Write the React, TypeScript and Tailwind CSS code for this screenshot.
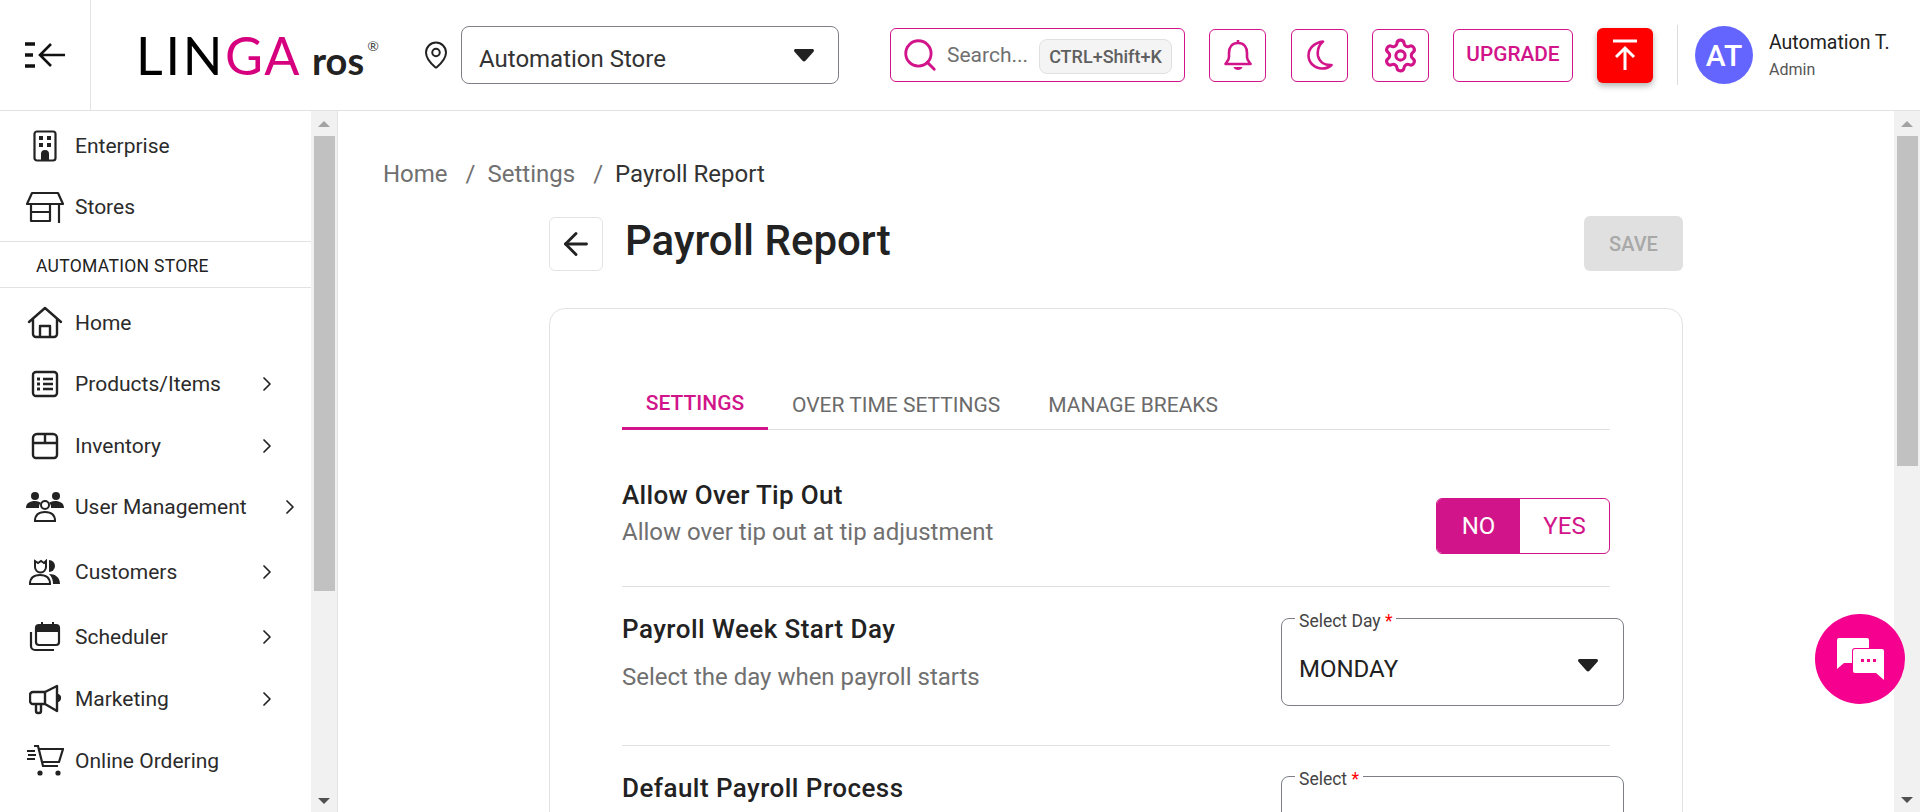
import { ArrowLeft, ChevronRight, MapPin, Search, Settings } from 'lucide-react';
import type { ReactNode } from 'react';

const roboto = { fontFamily: 'Roboto, sans-serif' };

function IconBox({ children }: { children: ReactNode }) {
  return (
    <button className="flex h-[53px] w-[57px] items-center justify-center rounded-md border border-[#d2148a] text-[#d2148a]">
      {children}
    </button>
  );
}

function BellIcon() {
  return (
    <svg width="28" height="32" viewBox="0 0 28 32" fill="none" stroke="currentColor" strokeWidth="2.6" strokeLinejoin="round">
      <path d="M14 1v3M14 4c-6 0-9 4-9 10v4c0 3-2 4.500-3.500 7h25c-1.500-2.500-3.500-4-3.500-7v-4c0-6-3-10-9-10z" />
      <path fill="currentColor" stroke="none" d="M9.500 28h9c-1 4-8 4-9 0z" />
    </svg>
  );
}

function MoonIcon() {
  return (
    <svg width="26" height="30" viewBox="0 0 26 30" fill="none" stroke="currentColor" strokeWidth="2.6" strokeLinejoin="round">
      <path d="M16 1.500C8 2.500 1.500 8 1.500 15.500S8 28.500 15 28.500c4 0 7-1 9.500-3.500-7 .5-12-3-13.500-9C10 10 12 5 16 1.500z" />
    </svg>
  );
}

function EnterpriseIcon() {
  return (
    <svg width="24" height="32" viewBox="0 0 24 32" fill="none" stroke="#222" strokeWidth="2.2">
      <rect x="1.500" y="1.500" width="21" height="29" rx="2.500" />
      <path fill="#222" stroke="none" d="M6 6h4v4H6zM14 6h4v4h-4zM6 13h4v4H6zM14 13h4v4h-4zM8 30v-6a4 4 0 0 1 8 0v6z" />
    </svg>
  );
}

function StoreIcon() {
  return (
    <svg width="38" height="32" viewBox="0 0 38 32" fill="none" stroke="#222" strokeWidth="2.2" strokeLinejoin="round">
      <path d="M6 2h26l5 11H1zM5 13v17h19V13M5 21h19M33 13v19" />
    </svg>
  );
}

function HomeIcon() {
  return (
    <svg width="36" height="34" viewBox="0 0 36 34" fill="none" stroke="#222" strokeWidth="2.400" strokeLinejoin="round" strokeLinecap="round">
      <path d="M2 16 18 2l16 14M6 13v15a3 3 0 0 0 3 3h18a3 3 0 0 0 3-3V13M13 31V20h10v11" />
    </svg>
  );
}

function ListIcon() {
  return (
    <svg width="28" height="28" viewBox="0 0 28 28" fill="none" stroke="#222" strokeWidth="2.400">
      <rect x="2" y="2" width="24" height="24" rx="3" />
      <path d="M12 9h10M12 14h10M12 19h10" />
      <path fill="#222" stroke="none" d="M6 7.500h3v3H6zM6 12.500h3v3H6zM6 17.500h3v3H6z" />
    </svg>
  );
}

function BoxIcon() {
  return (
    <svg width="28" height="28" viewBox="0 0 28 28" fill="none" stroke="#222" strokeWidth="2.400">
      <path d="M6 2h16a4 4 0 0 1 4 4v17a3 3 0 0 1-3 3H5a3 3 0 0 1-3-3V6a4 4 0 0 1 4-4zM2 11h24M14 2v9" />
    </svg>
  );
}

function UsersIcon() {
  return (
    <svg width="38" height="32" viewBox="0 0 38 32" fill="none" stroke="#222" strokeWidth="2">
      <circle cx="9" cy="5" r="4" fill="#222" stroke="none" />
      <circle cx="30" cy="5" r="4" fill="#222" stroke="none" />
      <path fill="#222" stroke="none" d="M0 17c0-5 4-7 9-7 3 0 5 1 6 2-2 1-2 3-2 5zM38 17c0-5-4-7-9-7-3 0-5 1-6 2 2 1 2 3 2 5z" />
      <circle cx="19" cy="14" r="4" />
      <path d="M9 30c0-6 4-9 10-9s10 3 10 9z" />
    </svg>
  );
}

function CustomersIcon() {
  return (
    <svg width="32" height="26" viewBox="0 0 32 26" fill="none" stroke="#222" strokeWidth="2">
      <path d="M6 2l3 2 3-2 3 2 2-2v6a5.500 5.500 0 0 1-11 0z" />
      <path d="M20 1a6 6 0 0 1 0 12z" fill="#222" stroke="none" />
      <path d="M1 25c0-6 4-9 10-9s10 3 10 9z" />
      <path d="M20 15c6 0 11 3 11 10h-7c0-4-1-7-4-10z" fill="#222" stroke="none" />
    </svg>
  );
}

function CalendarIcon() {
  return (
    <svg width="32" height="32" viewBox="0 0 32 32" fill="none" stroke="#222" strokeWidth="2.200">
      <rect x="7" y="4" width="23" height="20" rx="3" />
      <path fill="#222" stroke="none" d="M7 5h23v6H7zM12 1h2v4h-2zM23 1h2v4h-2z" />
      <path d="M2 11v14a4 4 0 0 0 4 4h19" />
    </svg>
  );
}

function MegaphoneIcon() {
  return (
    <svg width="32" height="32" viewBox="0 0 32 32" fill="none" stroke="#222" strokeWidth="2.400" strokeLinejoin="round">
      <path d="M28 3v25L16 21H4a3 3 0 0 1-3-3v-6a3 3 0 0 1 3-3h12zM16 9v12M7 21v7a2 2 0 0 0 2 2h1a2 2 0 0 0 2-2v-7" />
      <path d="M28 12a3 3 0 0 1 0 6" fill="#222" />
    </svg>
  );
}

function CartIcon() {
  return (
    <svg width="38" height="32" viewBox="0 0 38 32" fill="none" stroke="#222" strokeWidth="2.200">
      <path d="M8 1h4l5 20h15M12 4h25l-4 13H16" />
      <path d="M1 6h8M2 10h8M1 14h8" />
      <circle cx="14" cy="28" r="2.600" fill="#222" stroke="none" />
      <circle cx="32" cy="28" r="2.600" fill="#222" stroke="none" />
    </svg>
  );
}

function SideItem({ icon, label, arrow, chevronClass, rowClass }: { icon: ReactNode; label: string; arrow?: boolean; chevronClass?: string; rowClass: string }) {
  return (
    <div className={`flex items-center ${rowClass}`}>
      <div className="flex w-[75px] shrink-0 justify-center pl-[15px]">{icon}</div>
      <span className="whitespace-nowrap pt-[2px] text-[21px] text-[#2b2b2b]">{label}</span>
      {arrow && <ChevronRight size={24} strokeWidth={1.7} className={`ml-auto text-[#222] ${chevronClass ?? 'mr-[32px]'}`} />}
    </div>
  );
}

function ScrollBar({ thumb }: { thumb: string }) {
  return (
    <div className="flex h-full w-[26px] shrink-0 flex-col items-center bg-[#f1f1f1]">
      <div className="flex h-[25px] items-center justify-center">
        <div className="h-0 w-0 border-x-[6px] border-b-[6px] border-x-transparent border-b-[#a3a3a3]" />
      </div>
      <div className={`w-[21px] bg-[#c1c1c1] ${thumb}`} />
      <div className="mt-auto flex h-[25px] items-center justify-center">
        <div className="h-0 w-0 border-x-[6px] border-t-[6px] border-x-transparent border-t-[#505050]" />
      </div>
    </div>
  );
}

function Sidebar() {
  return (
    <aside className="flex h-[702px] w-[338px] shrink-0 border-r border-[#e4e4e4]">
      <div className="w-[311px] shrink-0 overflow-hidden">
        <SideItem rowClass="h-[61px] mt-[4px]" icon={<EnterpriseIcon />} label="Enterprise" />
        <SideItem rowClass="h-[61px]" icon={<StoreIcon />} label="Stores" />
        <div className="mt-[4px] flex h-[47px] items-center border-y border-[#e2e2e2] pl-[36px] pt-[4px] text-[17.500px] tracking-[0.3px] text-[#222]">AUTOMATION STORE</div>
        <SideItem rowClass="h-[61px] mt-[4px]" icon={<HomeIcon />} label="Home" />
        <SideItem rowClass="h-[62px]" icon={<ListIcon />} label="Products/Items" arrow />
        <SideItem rowClass="h-[61px]" icon={<BoxIcon />} label="Inventory" arrow />
        <SideItem rowClass="h-[62px]" icon={<UsersIcon />} label="User Management" arrow chevronClass="mr-[9px]" />
        <SideItem rowClass="h-[68px]" icon={<CustomersIcon />} label="Customers" arrow />
        <SideItem rowClass="h-[62px]" icon={<CalendarIcon />} label="Scheduler" arrow />
        <SideItem rowClass="h-[61px]" icon={<MegaphoneIcon />} label="Marketing" arrow />
        <SideItem rowClass="h-[63px]" icon={<CartIcon />} label="Online Ordering" />
      </div>
      <ScrollBar thumb="h-[455px]" />
    </aside>
  );
}

function CaretDown({ className }: { className?: string }) {
  return (
    <svg width="20" height="13" viewBox="0 0 20 13" fill="#222" className={className}>
      <path d="M2 0h16c2 0 2.500 1.500 1.500 2.700l-8 9c-.8 1-2.200 1-3 0l-8-9C-.5 1.500 0 0 2 0z" />
    </svg>
  );
}

function OutlinedSelect({ label, value }: { label: string; value: string }) {
  return (
    <div className="relative -mr-[14px] flex h-[88px] w-[343px] shrink-0 items-center justify-between rounded-lg border border-[#7c7f88] pl-[17px] pr-[25px] pt-[14px]">
      <span className="absolute -top-[8px] left-[13px] bg-white px-[4px] text-[17.500px] leading-[20px] text-[#444]">
        {label} <span className="text-[#f00]">*</span>
      </span>
      <span className="text-[24px] text-[#222]">{value}</span>
      <CaretDown className="-mt-[8px]" />
    </div>
  );
}

export default function App() {
  return (
    <div style={roboto} className="relative h-[812px] w-[1920px] overflow-hidden bg-white">
      {/* Top bar */}
      <header className="flex h-[111px] items-center border-b border-[#e2e2e2]">
        <div className="flex h-full w-[91px] shrink-0 items-center justify-center border-r border-[#e4e4e4]">
          <svg width="44" height="30" viewBox="0 0 44 30" fill="none" stroke="#111" strokeWidth="2.600">
            <path d="M2 4h10M2 15h8M2 26h10" strokeWidth="3.400" />
            <path d="M42 15H18M28 4 17 15l11 11" />
          </svg>
        </div>
        <div className="ml-[45px] flex w-[242px] shrink-0 items-baseline whitespace-nowrap" style={{ fontFamily: 'Lato, sans-serif' }}>
          <span className="text-[52px] leading-none tracking-[2.700px] text-black">LIN</span>
          <span className="text-[52px] leading-none tracking-[1.500px] text-[#d6007f]">GA</span>
          <span className="ml-[11px] text-[38px] font-bold leading-none text-[#222]">ros</span>
          <span className="ml-[3px] self-start pt-[10px] text-[14px] leading-none text-[#444]">®</span>
        </div>
        <MapPin size={30} strokeWidth={1.6} className="ml-[43px] shrink-0 text-[#222]" />
        <div className="ml-[10px] flex h-[58px] w-[378px] shrink-0 items-center justify-between rounded-lg border border-[#7c7f88] pl-[17px] pr-[24px]">
          <span className="pt-[8px] text-[24px] text-[#333]">Automation Store</span>
          <CaretDown />
        </div>
        <div className="ml-[51px] flex h-[54px] w-[295px] shrink-0 items-center rounded-md border border-[#d2148a] pl-[10px]">
          <Search size={38} strokeWidth={1.8} className="shrink-0 text-[#d2148a]" />
          <span className="ml-[8px] pt-[2px] text-[21px] text-[#707070]">Search...</span>
          <span className="ml-[11px] mt-[2px] whitespace-nowrap rounded-lg border border-[#e0e0e0] bg-[#f4f4f4] px-[9px] py-[3px] text-[18px] font-medium text-[#5f5f5f]">CTRL+Shift+K</span>
        </div>
        <div className="ml-[24px] flex shrink-0 items-center gap-[24px]">
          <IconBox><BellIcon /></IconBox>
          <div className="ml-[1px]"><IconBox><MoonIcon /></IconBox></div>
          <IconBox><Settings size={37} strokeWidth={2} /></IconBox>
          <button className="flex h-[53px] w-[120px] items-center justify-center rounded-md border border-[#d2148a] text-[20.800px] font-medium text-[#d2148a]">UPGRADE</button>
        </div>
        <button className="ml-[24px] flex h-[55px] w-[56px] shrink-0 items-center justify-center rounded-md bg-[#f00] shadow-[0_3px_6px_rgba(0,0,0,0.3)]">
          <svg width="28" height="34" viewBox="0 0 28 34" fill="none" stroke="#fff" strokeWidth="3">
            <path d="M2 3h24M14 32V11M5 19l9-9 9 9" />
          </svg>
        </button>
        <div className="ml-[24px] h-[60px] w-px shrink-0 bg-[#dcdcdc]" />
        <div className="ml-[17px] flex h-[58px] w-[58px] shrink-0 items-center justify-center rounded-full bg-[#6464ff] text-[30px] font-medium text-white">AT</div>
        <div className="ml-[16px] whitespace-nowrap">
          <div className="text-[19.500px] leading-[26px] text-[#222]">Automation T.</div>
          <div className="mt-[3px] text-[16px] leading-[22px] text-[#555]">Admin</div>
        </div>
      </header>

      <div className="flex h-[701px]">
        <Sidebar />
        <main className="min-w-0 flex-1 overflow-hidden">
          <nav className="flex items-center pl-[45px] pt-[47px] text-[24px] leading-[32px] text-[#707070]">
            <span>Home</span>
            <span className="ml-[18px]">/</span>
            <span className="ml-[12px]">Settings</span>
            <span className="ml-[18px]">/</span>
            <span className="ml-[12px] text-[#333]">Payroll Report</span>
          </nav>
          <div className="ml-[211px] w-[1134px]">
            <div className="mt-[26px] flex items-center justify-between">
              <div className="flex items-center">
                <button className="flex h-[54px] w-[54px] items-center justify-center rounded-md border border-[#e4e4e4]">
                  <ArrowLeft size={36} strokeWidth={1.9} className="text-[#222]" />
                </button>
                <h1 className="ml-[22px] pb-[5px] text-[42px] font-medium leading-[48px] text-[#222]">Payroll Report</h1>
              </div>
              <button className="h-[55px] w-[99px] rounded-md bg-[#e0e0e0] text-[20px] font-medium text-[#a8a8a8]">SAVE</button>
            </div>
            <section className="mt-[37px] h-[600px] rounded-2xl border border-[#e2e2e2] px-[72px] pt-[69px]">
              <div className="flex h-[52px] items-stretch border-b border-[#e0e0e0] text-[21px]">
                <div className="-mb-px flex w-[146px] items-center justify-center border-b-[3px] border-[#d2148a] pt-[3px] font-medium text-[#d2148a]">SETTINGS</div>
                <div className="ml-[24px] flex items-center pt-[4px] text-[#6b6b6b]">OVER TIME SETTINGS</div>
                <div className="ml-[48px] flex items-center pt-[4px] text-[#6b6b6b]">MANAGE BREAKS</div>
              </div>
              <div className="flex h-[157px] items-start justify-between border-b border-[#e0e0e0] pt-[49px]">
                <div>
                  <div className="text-[26px] font-medium leading-[32px] tracking-[0.3px] text-[#222]">Allow Over Tip Out</div>
                  <div className="text-[24px] leading-[42px] text-[#707070]">Allow over tip out at tip adjustment</div>
                </div>
                <div className="mt-[19px] flex h-[56px] w-[174px] overflow-hidden rounded-md border border-[#d2148a] text-[24px]">
                  <div className="flex w-[83px] items-center justify-center bg-[#d2148a] text-white">NO</div>
                  <div className="flex flex-1 items-center justify-center text-[#d2148a]">YES</div>
                </div>
              </div>
              <div className="flex h-[159px] items-start justify-between border-b border-[#e0e0e0] pt-[31px]">
                <div>
                  <div className="text-[26px] font-medium leading-[22px] tracking-[0.45px] text-[#222]">Payroll Week Start Day</div>
                  <div className="mt-[21px] text-[24px] leading-[32px] text-[#707070]">Select the day when payroll starts</div>
                </div>
                <OutlinedSelect label="Select Day" value="MONDAY" />
              </div>
              <div className="flex items-start justify-between pt-[30px]">
                <div className="mt-[1px] text-[26px] font-medium leading-[22px] tracking-[0.45px] text-[#222]">Default Payroll Process</div>
                <OutlinedSelect label="Select" value="" />
              </div>
            </section>
          </div>
        </main>
        <ScrollBar thumb="h-[330px]" />
      </div>

      {/* Chat bubble */}
      <button className="absolute left-[1815px] top-[614px] flex h-[90px] w-[90px] items-center justify-center rounded-full bg-[#f5008f]">
        <svg width="47" height="42" viewBox="0 0 47 42" fill="#fff">
          <path d="M2 0h28a2 2 0 0 1 2 2v8H18a3 3 0 0 0-3 3v12H7l-7 6V2a2 2 0 0 1 2-2z" />
          <path d="M18 11h27a2 2 0 0 1 2 2v29l-8-7H18a2 2 0 0 1-2-2V13a2 2 0 0 1 2-2z" />
          <path fill="#f5008f" d="M24 21h3v3h-3zM30 21h3v3h-3zM36 21h3v3h-3z" />
        </svg>
      </button>
    </div>
  );
}
